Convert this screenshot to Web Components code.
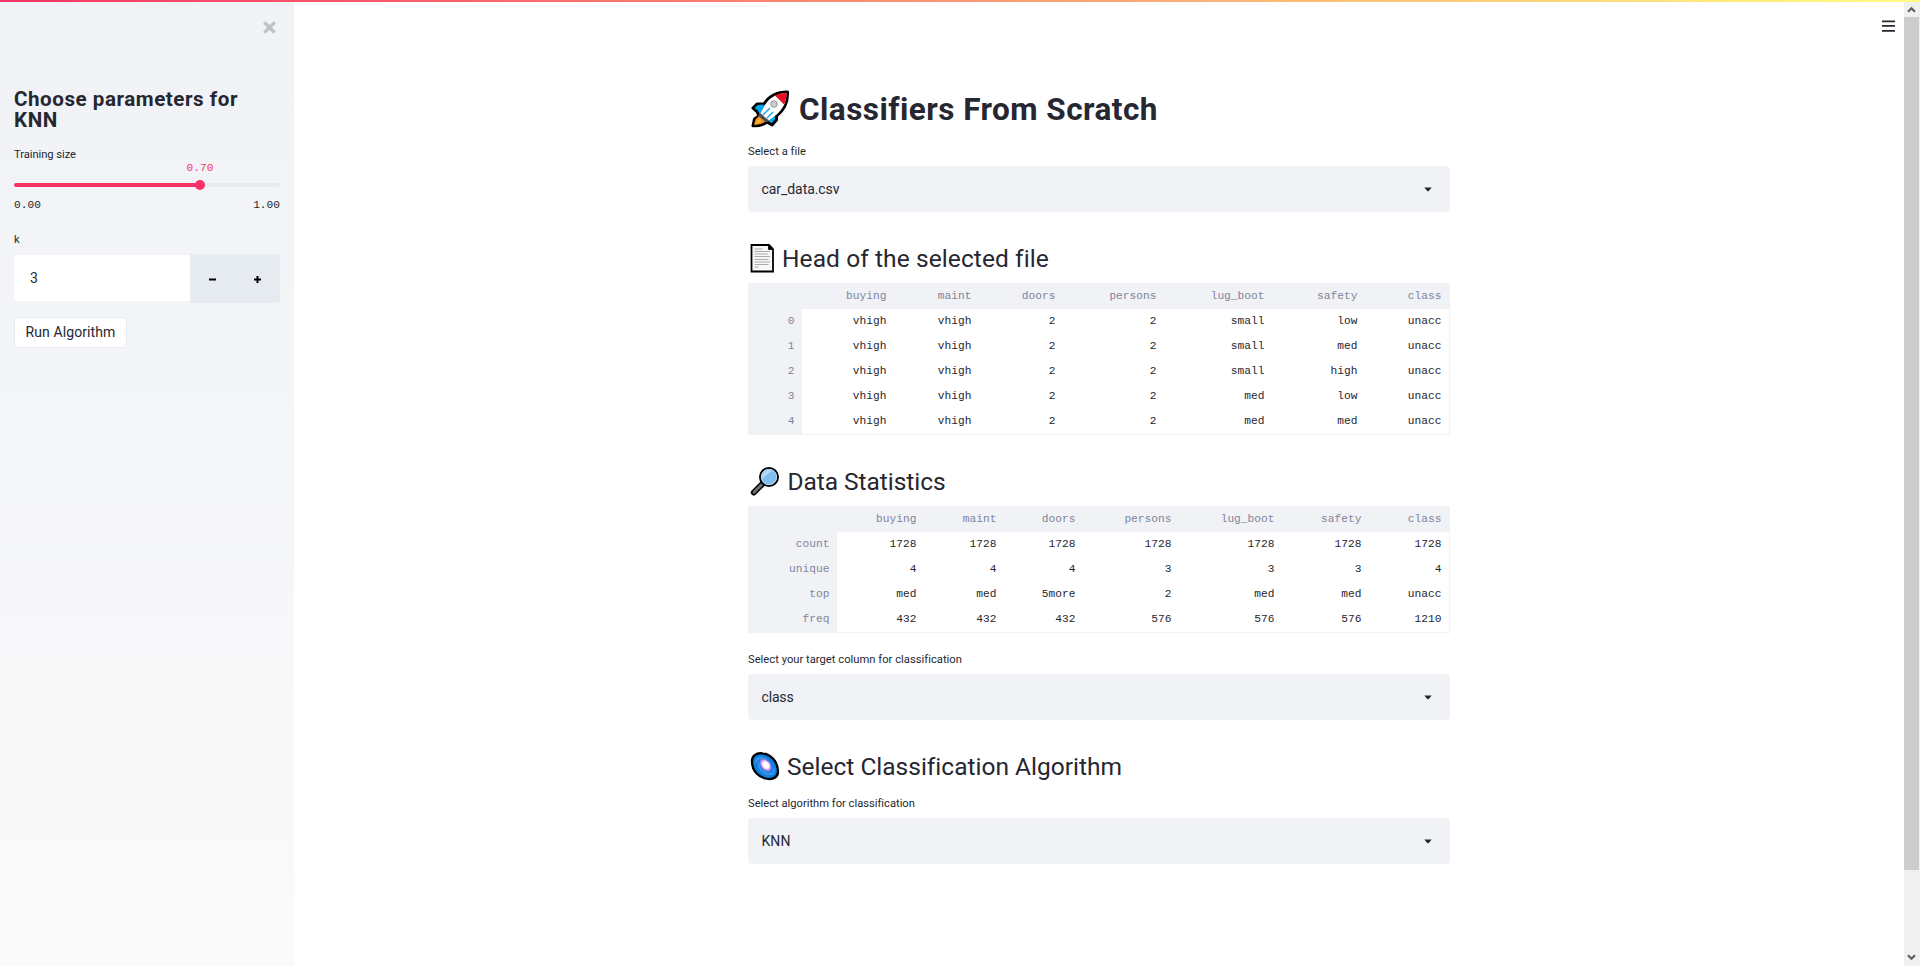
<!DOCTYPE html>
<html lang="en">
<head>
<meta charset="utf-8">
<title>Classifiers From Scratch</title>
<style>
html,body{margin:0;height:100%;overflow:hidden;background:#fff}
body{font-family:Roboto,"Liberation Sans",sans-serif;font-size:14px;color:#262730}
</style>
</head>
<body>
<app-shell>
  <side-panel slot="side">
    <side-title><fit-text w="224">Choose parameters for</fit-text><br><fit-text w="44">KNN</fit-text></side-title>
    <range-slider label="Training size" label-width="62" value="0.70" min="0.00" max="1.00"></range-slider>
    <number-input label="k" value="3"></number-input>
    <push-button><fit-text w="90">Run Algorithm</fit-text></push-button>
  </side-panel>
  <page-title><emoji-icon name="rocket"></emoji-icon><fit-text w="358.500">Classifiers From Scratch</fit-text></page-title>
  <select-box label="Select a file" label-width="57.500" value="car_data.csv" value-width="78"></select-box>
  <section-title><emoji-icon name="page"></emoji-icon><fit-text w="266">Head of the selected file</fit-text></section-title>
  <data-frame cols="54 92 85 84 101 108 93 85">|buying|maint|doors|persons|lug_boot|safety|class
0|vhigh|vhigh|2|2|small|low|unacc
1|vhigh|vhigh|2|2|small|med|unacc
2|vhigh|vhigh|2|2|small|high|unacc
3|vhigh|vhigh|2|2|med|low|unacc
4|vhigh|vhigh|2|2|med|med|unacc</data-frame>
  <section-title><emoji-icon name="lens"></emoji-icon><fit-text w="158">Data Statistics</fit-text></section-title>
  <data-frame class="gap" cols="89 87 80 79 96 103 87 81">|buying|maint|doors|persons|lug_boot|safety|class
count|1728|1728|1728|1728|1728|1728|1728
unique|4|4|4|3|3|3|4
top|med|med|5more|2|med|med|unacc
freq|432|432|432|576|576|576|1210</data-frame>
  <select-box label="Select your target column for classification" label-width="213.500" value="class" value-width="32"></select-box>
  <section-title><emoji-icon name="galaxy"></emoji-icon><fit-text w="334">Select Classification Algorithm</fit-text></section-title>
  <select-box label="Select algorithm for classification" label-width="166.500" value="KNN" value-width="29"></select-box>
</app-shell>
<script>
const define=(name,html,setup)=>customElements.define(name,class extends HTMLElement{
  constructor(){
    super();
    const t=document.createElement('template');
    t.innerHTML=html;
    this.attachShadow({mode:'open'}).append(t.content.cloneNode(true));
  }
  connectedCallback(){ if(setup&&!this.ready){this.ready=true;setup(this,this.shadowRoot);} }
});

define('app-shell',`<style>
:host{display:grid;grid-template:2px calc(100vh - 2px)/294px 1fr 16px;height:100vh;overflow:hidden}
.bar{grid-column:1/4;background:linear-gradient(90deg,#f63366,#fffd80)}
main{position:relative;display:flex;justify-content:center}
.col{width:702px;padding-top:86px}
::slotted(section-title){margin-top:31px}
::slotted(select-box:first-of-type){margin-top:12px}
::slotted(data-frame.gap){margin-bottom:17px}
::slotted(section-title:last-of-type){margin-bottom:11px}
svg{position:absolute;right:9px;top:18px}
.col,main{box-sizing:border-box}
</style><div class="bar"></div><slot name="side"></slot>
<main><div class="col"><slot></slot></div>
<svg width="13" height="12" fill="#262730"><path d="M0 .5h13v1.700H0zM0 5h13v1.700H0zM0 10h13v1.700H0z"/></svg></main>
<scroll-bar></scroll-bar>`);

define('scroll-bar',`<style>
:host{display:flex;flex-direction:column;background:#f0f0f0}
.cap{height:15px;display:flex;align-items:center;justify-content:center}
.cap:last-child{height:17px}
.thumb{height:853px;width:15px;background:#cdcdcd}
.space{flex:1}
svg{display:block;margin-right:1px}
path{fill:none;stroke:#606060;stroke-width:2.2}
</style><div class="cap"><svg width="9" height="7"><path d="M1 5.7 4.5 2.2 8 5.7"/></svg></div><div class="thumb"></div><div class="space"></div>
<div class="cap"><svg width="9" height="7"><path d="M1 1.3 4.5 4.8 8 1.3"/></svg></div>`);

define('side-panel',`<style>
:host{display:flex;flex-direction:column;align-items:stretch;background:linear-gradient(180deg,#f0f2f6,#fafafa);padding:0 14px;position:relative}
svg{position:absolute;left:263px;top:18.5px}
</style><svg width="13" height="13"><path d="M2.500 2.500l8 8M10.500 2.500l-8 8" stroke="#bfc1c5" stroke-width="3.300" stroke-linecap="square"/></svg><slot></slot>`);

define('side-title',`<style>:host{display:block;margin-top:87px;height:42px;font-weight:700;font-size:20.6px;line-height:21px;white-space:nowrap}</style><slot></slot>`);

define('range-slider',`<style>
:host{display:block;margin-top:15px;height:66px}
.label{font-size:11.2px;line-height:18px;height:15px}
.mono{font:11.2px/14px "Liberation Mono",monospace;height:14px}
.v{display:flex;justify-content:center;width:372px;color:#f63366}
.track{height:4px;margin-top:8px;border-radius:2px;background:linear-gradient(90deg,#f63366 70%,#e6eaf1 70%);display:flex;align-items:center}
.thumb{width:10px;height:10px;border-radius:50%;background:#f63366;margin-left:181px}
.ends{display:flex;justify-content:space-between;margin-top:11px}
</style><div class="label"></div><div class="mono v"></div><div class="track"><div class="thumb"></div></div><div class="mono ends"><span class="a"></span><span class="b"></span></div>`,(el,r)=>{
  r.querySelector('.label').innerHTML=`<fit-text w="${el.getAttribute('label-width')}">${el.getAttribute('label')}</fit-text>`;
  r.querySelector('.v').textContent=el.getAttribute('value');
  r.querySelector('.a').textContent=el.getAttribute('min');
  r.querySelector('.b').textContent=el.getAttribute('max');
});

define('number-input',`<style>
:host{display:block;margin-top:18px}
.label{font-size:11.2px;line-height:20px;height:24px}
.row{display:flex;align-items:flex-start;height:49px}
.field{box-sizing:border-box;width:176px;height:46px;margin-top:1px;padding-left:16px;line-height:46px;background:#fff;border-radius:4px 0 0 4px}
.btns{display:flex;width:90px;height:49px;background:#e6eaf1;border-radius:0 4px 4px 0}
.btns div{flex:1;display:flex;align-items:center;justify-content:center;padding-top:1px}
</style><div class="label"></div><div class="row"><div class="field"></div><div class="btns">
<div><svg width="7" height="7"><path d="M0 2.5h7v2H0z"/></svg></div><div><svg width="7" height="7"><path d="M0 2.5h2.5V0h2v2.5H7v2H4.5V7h-2V4.5H0z"/></svg></div></div></div>`,(el,r)=>{
  r.querySelector('.label').textContent=el.getAttribute('label');
  r.querySelector('.field').textContent=el.getAttribute('value');
});

define('push-button',`<style>:host{display:block;box-sizing:border-box;margin-top:14px;width:113px;height:31px;border:1px solid #e6eaf1;border-radius:4px;background:#fff;padding-left:10.5px;line-height:28px}</style><slot></slot>`);

define('page-title',`<style>:host{display:flex;height:42px;line-height:43px;font-size:31.5px;font-weight:700}</style><slot></slot>`);

define('section-title',`<style>:host{display:flex;height:32px;line-height:31px;font-size:24.5px;margin-bottom:8px}</style><slot></slot>`);

define('select-box',`<style>
:host{display:block}
.label{font-size:11.2px;line-height:20px;height:24px}
.box{display:flex;align-items:center;justify-content:space-between;height:46px;box-sizing:border-box;padding:0 18px 0 13.5px;background:#f0f2f6;border-radius:4px}
svg{margin-top:1px}
</style><div class="label"></div><div class="box"><span></span><svg width="8" height="5"><path d="M.3.5h7.4L4.8 3.9Q4 4.6 3.2 3.9z" fill="#262730"/></svg></div>`,(el,r)=>{
  r.querySelector('.label').innerHTML=`<fit-text w="${el.getAttribute('label-width')}">${el.getAttribute('label')}</fit-text>`;
  r.querySelector('span').innerHTML=`<fit-text w="${el.getAttribute('value-width')}">${el.getAttribute('value')}</fit-text>`;
});

define('data-frame',`<style>
:host{display:block}
.grid{display:grid;box-sizing:border-box;width:702px;border:solid #f0f2f6;border-width:0 1px 1px 0;font:11.2px/24px "Liberation Mono",monospace;text-align:right}
.c{height:25px;padding-right:7.6px}
.c.h{height:26px;line-height:26px}
.h,.i{background:#f0f2f6;color:#7f859b}
</style><div class="grid"></div>`,(el,r)=>{
  const w=el.getAttribute('cols').split(' ').map(Number);
  w[w.length-1]-=1;
  const g=r.querySelector('.grid');
  g.style.gridTemplateColumns=w.map(n=>n+'px').join(' ');
  el.textContent.trim().split('\n').forEach((line,y)=>line.split('|').forEach((t,x)=>{
    const d=document.createElement('div');
    d.className='c'+(y?'':' h')+(x?'':' i');
    d.textContent=t;
    g.append(d);
  }));
});

const emojis={
  rocket:[51,42,`<path d="M39.500 4C30 4 21 8 16 16H9L5 20 9 23.500 11 28 6.500 31 5 37.800C10 38 15 37 19 34L24 37 28.500 32V28C36 22 40 14 39.500 4z" fill="#00a8f0" stroke="#000" stroke-width="3" stroke-linejoin="round"/><path d="M38.500 5C29 5.500 22 9 17 17L12 26 20 33 28 27C35 21 38.500 14 38.500 5z" fill="#fff"/><path d="M27 7.500C31 5.500 35 5 38.800 4.800 38.800 9 38 13 36 16.500z" fill="#e81123"/><path d="M16 16.500 10 17 6.500 20 10 22.500 11.500 26z" fill="#00a8f0"/><path d="M11 28 7.500 31.500 6 36.800C10 36.800 14 36 17.500 33.500z" fill="#f7941d"/><path d="M9 33 12 31 13 34 8 35.500z" fill="#ffb938"/><path d="M12 25 21 32.500 18 34.500 10 27.500z" fill="#4b4f55"/><path d="M15 27l7-7M19 30l6-6" stroke="#19a9e5" stroke-width="1.500"/><circle cx="26" cy="16" r="3.300" fill="#ccc" stroke="#999"/>`],
  page:[34,32,`<path d="M3.500 2H21l4 4v22.500H3.500z" fill="#f7f7f7" stroke="#000" stroke-width="1.800"/><path d="M20.500 2v4.500H25" fill="#000" stroke="#000" stroke-width=".8"/><path d="M6.500 6h8M6.500 8.500h15.500M6.500 11h13.500M6.500 13.500h15.500M6.500 16.500h14M6.500 19h15.500M6.500 21.500h14M6.500 24h4" stroke="#aaa" stroke-width="1.100"/>`],
  lens:[39.5,32,`<path d="M5.800 26.500 14.500 17.800" stroke="#000" stroke-width="6" stroke-linecap="round"/><path d="M6 26.300 13.500 18.800" stroke="#69737b" stroke-width="3" stroke-linecap="round"/><circle cx="21" cy="11" r="9" fill="#83bdec" stroke="#000" stroke-width="2"/><circle cx="21" cy="11" r="7.700" fill="none" stroke="#b4d3ea"/><path d="M14 13a7.300 7.300 0 0 1 10-8.500z" fill="#b7d8f3"/>`],
  galaxy:[39,32,`<path d="M4 11C3.500 5 8 1.500 14.500 2.300 23 3 30 11 30 20 30.500 25.500 26 28.500 20 28 11 27 4 20 4 11z" fill="#0063b1" stroke="#000" stroke-width="2.200"/><path d="M5.500 11C5 6 9 3.500 14 4 22 5 28.500 12 28.500 19.500 28.500 24.500 25 27 20 26.500 12 25.500 5.500 19 5.500 11z" fill="#1280e0"/><path d="M8 12C8 7 12 5.500 17 8M26 17C27 22 22 25 17 22 13 20 10 16 11 12" stroke="#3d9bee" stroke-width="1.500"/><ellipse cx="17.700" cy="14" rx="7.500" ry="5" transform="rotate(52 17.700 14)" fill="#8f7ce8"/><ellipse cx="17.700" cy="14" rx="5.700" ry="3.900" transform="rotate(52 17.700 14)" fill="#e0bcff"/><ellipse cx="18" cy="14" rx="4" ry="2.900" transform="rotate(52 18 14)" fill="#fff"/>`]
};
define('emoji-icon',`<style>:host{display:block;flex:none}svg{display:block;overflow:visible}</style><div></div>`,(el,r)=>{
  const [w,h,body]=emojis[el.getAttribute('name')];
  r.querySelector('div').innerHTML=`<svg width="${w}" height="${h}" fill="none">${body}</svg>`;
});

/* Registered last: it measures itself, so the fonts of its hosts must already apply. */
define('fit-text',`<style>:host{display:inline-block;white-space:nowrap}</style><slot></slot>`,(el)=>{
  const target=parseFloat(el.getAttribute('w'));
  const natural=el.getBoundingClientRect().width;
  el.style.letterSpacing=((target-natural)/el.textContent.length)+'px';
});
</script>
</body>
</html>
